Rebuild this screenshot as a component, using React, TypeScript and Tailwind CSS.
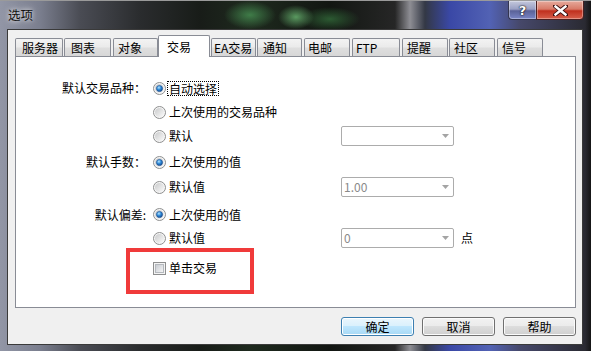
import React from "react";

const tabs: { label: string; cls: string; sel?: boolean }[] = [
  { label: "服务器", cls: "w-[48px] pl-[6px]" },
  { label: "图表", cls: "w-[47px] ml-[1px] pl-[6px]" },
  { label: "对象", cls: "w-[45px] ml-[2px] pl-[4px]" },
  { label: "交易", cls: "w-[52px] pl-[8px]", sel: true },
  { label: "EA交易", cls: "w-[45px] ml-[1px] pl-[2px]" },
  { label: "通知", cls: "w-[45px] ml-[1px] pl-[5px]" },
  { label: "电邮", cls: "w-[46px] ml-[2px] pl-[3px]" },
  { label: "FTP", cls: "w-[48px] ml-[2px] pl-[3px]" },
  { label: "提醒", cls: "w-[46px] ml-[2px] pl-[4px]" },
  { label: "社区", cls: "w-[46px] ml-[1px] pl-[4px]" },
  { label: "信号", cls: "w-[46px] ml-[2px] pl-[4px]" },
];

function Radio({ checked }: { checked?: boolean }) {
  return (
    <svg width="13" height="13" viewBox="0 0 13 13" className="shrink-0">
      <defs>
        <linearGradient id="rg" x1="0" y1="0" x2="1" y2="1">
          <stop offset="0" stopColor="#c9cacb" />
          <stop offset="1" stopColor="#fbfbfb" />
        </linearGradient>
        <radialGradient id="rdot" cx="0.4" cy="0.35" r="0.75">
          <stop offset="0" stopColor="#b4e4ff" />
          <stop offset="0.45" stopColor="#2f8ad8" />
          <stop offset="1" stopColor="#0b3a80" />
        </radialGradient>
      </defs>
      <circle cx="6.5" cy="6.5" r="6" fill="#f6f6f6" stroke="#8e8f8f" />
      <circle cx="6.5" cy="6.5" r="4.6" fill="url(#rg)" />
      {checked && <circle cx="6.5" cy="6.5" r="3.1" fill="url(#rdot)" stroke="#1b4f8f" strokeWidth="0.6" />}
    </svg>
  );
}

function Check() {
  return (
    <svg width="13" height="13" viewBox="0 0 13 13" className="shrink-0">
      <defs>
        <linearGradient id="cg" x1="0" y1="0" x2="1" y2="1">
          <stop offset="0" stopColor="#c6cad0" />
          <stop offset="1" stopColor="#f7f7f7" />
        </linearGradient>
      </defs>
      <rect x="0.5" y="0.5" width="12" height="12" fill="#f4f4f4" stroke="#8e8f8f" />
      <rect x="2.5" y="2.5" width="8" height="8" fill="url(#cg)" stroke="#b5b9be" />
    </svg>
  );
}

function Combo({ value }: { value?: string }) {
  return (
    <div className="w-[113px] h-[20px] border border-[#acacac] rounded-[2px] bg-white flex items-center justify-between pl-[2px] pr-[4px]">
      <span className="text-[#8a8a8a] leading-[14px]">{value ?? ""}</span>
      <svg width="7" height="4" viewBox="0 0 7 4">
        <polygon points="0,0 7,0 3.5,4" fill="#a4a4a4" />
      </svg>
    </div>
  );
}

function Btn({ label, primary }: { label: string; primary?: boolean }) {
  return (
    <div
      className={
        primary
          ? "w-[73px] h-[19px] rounded-[3px] border border-[#3c7fb1] bg-[linear-gradient(#eaf6fd,#d9f0fc_50%,#bee6fd_50%,#a7d9f5)] shadow-[inset_0_0_0_1px_#ffffff] flex items-center justify-center leading-[14px]"
          : "w-[73px] h-[19px] rounded-[3px] border border-[#707070] bg-[linear-gradient(#f2f2f2,#ebebeb_50%,#dddddd_50%,#cfcfcf)] shadow-[inset_0_0_0_1px_#fbfbfb] flex items-center justify-center leading-[14px]"
      }
    >
      {label}
    </div>
  );
}

export default function App() {
  return (
    <div className="w-[591px] h-[351px] overflow-hidden flex flex-col border-t border-[#9a9a9a] font-['Noto_Sans_CJK_SC','Noto_Sans',sans-serif] text-[12px] text-black bg-[radial-gradient(ellipse_26px_14px_at_250px_14px,#3f7c48,transparent),radial-gradient(ellipse_18px_12px_at_296px_16px,#5a9a60,transparent),radial-gradient(ellipse_30px_12px_at_330px_18px,#2c5a32,transparent),linear-gradient(90deg,#9296a6_0px,#7a7e8e_40px,#4a4c54_80px,#2a2c2e_140px,#181c18_200px,#1e2a1e_250px,#121612_330px,#262626_395px,#8e8e94_410px,#333845_425px,#3a48a6_450px,#5262b4_490px,#46486a_520px,#2a2a32_585px,#151515_591px)]">
      {/* title bar */}
      <div className="h-[28px] shrink-0 flex items-start justify-between">
        <div className="pl-[8px] pt-[6px] text-[12.5px] leading-[16px] text-[#111] [text-shadow:0_0_4px_#ffffffcc,0_0_8px_#ffffff99]">
          选项
        </div>
        <div className="flex mr-[7px] -mt-px">
          <div className="w-[28px] h-[20px] border border-[#343650] border-r-0 rounded-bl-[4px] bg-[linear-gradient(#c4c8dc,#9aa0c4_45%,#5a6299_55%,#7a86c6)] shadow-[inset_0_0_0_1px_#ffffff55] flex items-center justify-center">
            <span className="font-['DejaVu_Sans',sans-serif] font-bold text-[13px] leading-[13px] text-white [text-shadow:0_0_1px_#000,0_0_2px_#000]">?</span>
          </div>
          <div className="w-[48px] h-[20px] border border-[#4a2020] rounded-br-[4px] bg-[linear-gradient(#e6aa9c,#d87a68_45%,#c0301e_55%,#d6604c)] shadow-[inset_0_0_0_1px_#ffffff55] flex items-center justify-center">
            <svg width="15" height="11" viewBox="0 0 15 11">
              <path d="M2 1 L13 10 M13 1 L2 10" stroke="#3a1010" strokeWidth="4.2" strokeLinecap="square" />
              <path d="M2.5 1.5 L12.5 9.5 M12.5 1.5 L2.5 9.5" stroke="#ffffff" strokeWidth="2.4" strokeLinecap="square" />
            </svg>
          </div>
        </div>
      </div>

      {/* client area */}
      <div className="ml-[7px] mr-[8px] mb-[7px] h-[316px] shrink-0 bg-[#f0f0f0] border border-[#3a3a3a] flex flex-col pl-[7px] pr-[6px] pt-[5px]">
        {/* tabs */}
        <div className="h-[21px] flex items-end shrink-0">
          {tabs.map((t) =>
            t.sel ? (
              <div
                key={t.label}
                className={`${t.cls} h-[22px] -mb-px relative z-10 bg-white border border-b-0 border-[#898c95] rounded-t-[2px] flex items-center leading-[14px]`}
              >
                {t.label}
              </div>
            ) : (
              <div
                key={t.label}
                className={`${t.cls} h-[18px] border border-b-0 border-[#898c95] rounded-t-[2px] bg-[linear-gradient(#f3f3f3,#ebebeb_45%,#dedede_55%,#d7d7d7)] flex items-center leading-[14px]`}
              >
                {t.label}
              </div>
            )
          )}
        </div>

        {/* panel */}
        <div className="relative h-[252px] shrink-0 bg-white border border-[#898c95] pt-[19px] flex flex-col">
          <div className="flex items-center h-[24px]">
            <div className="w-[130px] text-right leading-[14px]">默认交易品种：</div>
            <div className="ml-[7px] w-[188px] flex items-center">
              <Radio checked />
              <span className="ml-[2px] px-[1px] leading-[13px] outline-1 outline-dotted outline-black">自动选择</span>
            </div>
          </div>
          <div className="flex items-center h-[24px]">
            <div className="w-[130px]" />
            <div className="ml-[7px] w-[188px] flex items-center">
              <Radio />
              <span className="ml-[3px] leading-[14px]">上次使用的交易品种</span>
            </div>
          </div>
          <div className="flex items-center h-[24px]">
            <div className="w-[130px]" />
            <div className="ml-[7px] w-[188px] flex items-center">
              <Radio />
              <span className="ml-[3px] leading-[14px]">默认</span>
            </div>
            <Combo />
          </div>

          <div className="flex items-center h-[24px] mt-[2px]">
            <div className="w-[130px] text-right leading-[14px]">默认手数：</div>
            <div className="ml-[7px] w-[188px] flex items-center">
              <Radio checked />
              <span className="ml-[3px] leading-[14px]">上次使用的值</span>
            </div>
          </div>
          <div className="flex items-center h-[24px] mt-[1px]">
            <div className="w-[130px]" />
            <div className="ml-[7px] w-[188px] flex items-center">
              <Radio />
              <span className="ml-[3px] leading-[14px]">默认值</span>
            </div>
            <Combo value="1.00" />
          </div>

          <div className="flex items-center h-[23px] mt-[4px]">
            <div className="w-[130px] text-right leading-[14px]">默认偏差:</div>
            <div className="ml-[7px] w-[188px] flex items-center">
              <Radio checked />
              <span className="ml-[3px] leading-[14px]">上次使用的值</span>
            </div>
          </div>
          <div className="flex items-center h-[24px]">
            <div className="w-[130px]" />
            <div className="ml-[7px] w-[188px] flex items-center">
              <Radio />
              <span className="ml-[3px] leading-[14px]">默认值</span>
            </div>
            <Combo value="0" />
            <span className="ml-[7px] leading-[14px]">点</span>
          </div>

          <div className="flex items-center h-[24px] mt-[6px]">
            <div className="w-[130px]" />
            <div className="ml-[7px] w-[188px] flex items-center">
              <Check />
              <span className="ml-[3px] leading-[14px]">单击交易</span>
            </div>
          </div>

          {/* annotation box */}
          <div className="absolute left-[110px] top-[191px] w-[128px] h-[46px] border-4 border-[#f03a3a]" />
        </div>

        {/* buttons */}
        <div className="mt-[9px] flex justify-end gap-[8px]">
          <Btn label="确定" primary />
          <Btn label="取消" />
          <Btn label="帮助" />
        </div>
      </div>
    </div>
  );
}
